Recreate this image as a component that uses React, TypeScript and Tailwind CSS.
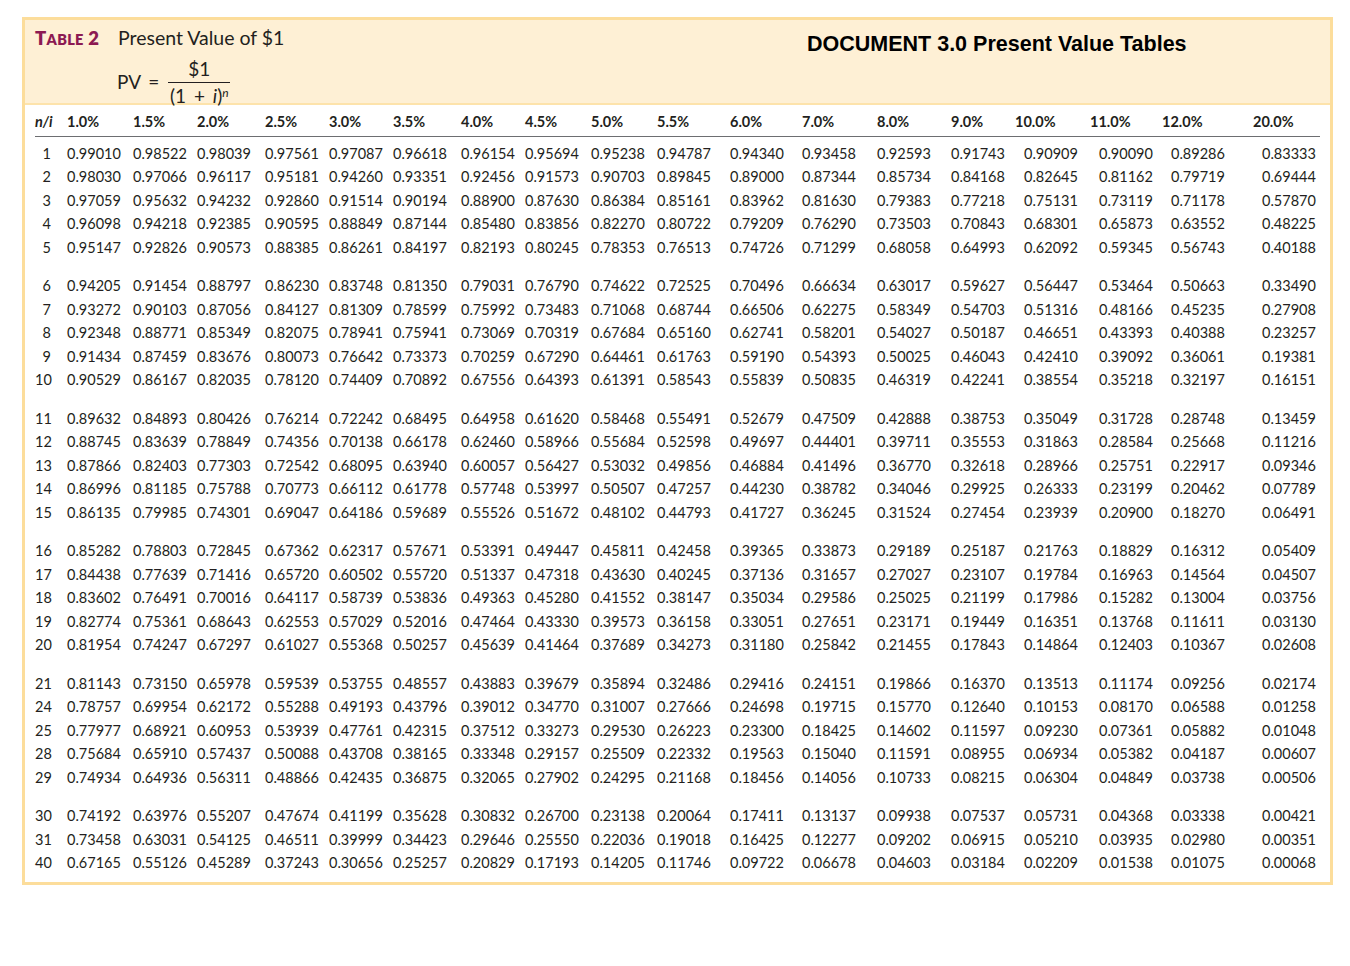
const rates = ["1.0%", "1.5%", "2.0%", "2.5%", "3.0%", "3.5%", "4.0%", "4.5%", "5.0%", "5.5%", "6.0%", "7.0%", "8.0%", "9.0%", "10.0%", "11.0%", "12.0%", "20.0%"];

// column widths measured from the left edge of each data column
const widths = ["w-[66px]", "w-[64px]", "w-[68px]", "w-[64px]", "w-[64px]", "w-[68px]", "w-[64px]", "w-[66px]", "w-[66px]", "w-[73px]", "w-[72px]", "w-[75px]", "w-[74px]", "w-[73px]", "w-[75px]", "w-[72px]", "w-[91px]", "w-[58px]"];

const raw: [string, string][] = [
  ["1", "0.99010 0.98522 0.98039 0.97561 0.97087 0.96618 0.96154 0.95694 0.95238 0.94787 0.94340 0.93458 0.92593 0.91743 0.90909 0.90090 0.89286 0.83333"],
  ["2", "0.98030 0.97066 0.96117 0.95181 0.94260 0.93351 0.92456 0.91573 0.90703 0.89845 0.89000 0.87344 0.85734 0.84168 0.82645 0.81162 0.79719 0.69444"],
  ["3", "0.97059 0.95632 0.94232 0.92860 0.91514 0.90194 0.88900 0.87630 0.86384 0.85161 0.83962 0.81630 0.79383 0.77218 0.75131 0.73119 0.71178 0.57870"],
  ["4", "0.96098 0.94218 0.92385 0.90595 0.88849 0.87144 0.85480 0.83856 0.82270 0.80722 0.79209 0.76290 0.73503 0.70843 0.68301 0.65873 0.63552 0.48225"],
  ["5", "0.95147 0.92826 0.90573 0.88385 0.86261 0.84197 0.82193 0.80245 0.78353 0.76513 0.74726 0.71299 0.68058 0.64993 0.62092 0.59345 0.56743 0.40188"],
  ["6", "0.94205 0.91454 0.88797 0.86230 0.83748 0.81350 0.79031 0.76790 0.74622 0.72525 0.70496 0.66634 0.63017 0.59627 0.56447 0.53464 0.50663 0.33490"],
  ["7", "0.93272 0.90103 0.87056 0.84127 0.81309 0.78599 0.75992 0.73483 0.71068 0.68744 0.66506 0.62275 0.58349 0.54703 0.51316 0.48166 0.45235 0.27908"],
  ["8", "0.92348 0.88771 0.85349 0.82075 0.78941 0.75941 0.73069 0.70319 0.67684 0.65160 0.62741 0.58201 0.54027 0.50187 0.46651 0.43393 0.40388 0.23257"],
  ["9", "0.91434 0.87459 0.83676 0.80073 0.76642 0.73373 0.70259 0.67290 0.64461 0.61763 0.59190 0.54393 0.50025 0.46043 0.42410 0.39092 0.36061 0.19381"],
  ["10", "0.90529 0.86167 0.82035 0.78120 0.74409 0.70892 0.67556 0.64393 0.61391 0.58543 0.55839 0.50835 0.46319 0.42241 0.38554 0.35218 0.32197 0.16151"],
  ["11", "0.89632 0.84893 0.80426 0.76214 0.72242 0.68495 0.64958 0.61620 0.58468 0.55491 0.52679 0.47509 0.42888 0.38753 0.35049 0.31728 0.28748 0.13459"],
  ["12", "0.88745 0.83639 0.78849 0.74356 0.70138 0.66178 0.62460 0.58966 0.55684 0.52598 0.49697 0.44401 0.39711 0.35553 0.31863 0.28584 0.25668 0.11216"],
  ["13", "0.87866 0.82403 0.77303 0.72542 0.68095 0.63940 0.60057 0.56427 0.53032 0.49856 0.46884 0.41496 0.36770 0.32618 0.28966 0.25751 0.22917 0.09346"],
  ["14", "0.86996 0.81185 0.75788 0.70773 0.66112 0.61778 0.57748 0.53997 0.50507 0.47257 0.44230 0.38782 0.34046 0.29925 0.26333 0.23199 0.20462 0.07789"],
  ["15", "0.86135 0.79985 0.74301 0.69047 0.64186 0.59689 0.55526 0.51672 0.48102 0.44793 0.41727 0.36245 0.31524 0.27454 0.23939 0.20900 0.18270 0.06491"],
  ["16", "0.85282 0.78803 0.72845 0.67362 0.62317 0.57671 0.53391 0.49447 0.45811 0.42458 0.39365 0.33873 0.29189 0.25187 0.21763 0.18829 0.16312 0.05409"],
  ["17", "0.84438 0.77639 0.71416 0.65720 0.60502 0.55720 0.51337 0.47318 0.43630 0.40245 0.37136 0.31657 0.27027 0.23107 0.19784 0.16963 0.14564 0.04507"],
  ["18", "0.83602 0.76491 0.70016 0.64117 0.58739 0.53836 0.49363 0.45280 0.41552 0.38147 0.35034 0.29586 0.25025 0.21199 0.17986 0.15282 0.13004 0.03756"],
  ["19", "0.82774 0.75361 0.68643 0.62553 0.57029 0.52016 0.47464 0.43330 0.39573 0.36158 0.33051 0.27651 0.23171 0.19449 0.16351 0.13768 0.11611 0.03130"],
  ["20", "0.81954 0.74247 0.67297 0.61027 0.55368 0.50257 0.45639 0.41464 0.37689 0.34273 0.31180 0.25842 0.21455 0.17843 0.14864 0.12403 0.10367 0.02608"],
  ["21", "0.81143 0.73150 0.65978 0.59539 0.53755 0.48557 0.43883 0.39679 0.35894 0.32486 0.29416 0.24151 0.19866 0.16370 0.13513 0.11174 0.09256 0.02174"],
  ["24", "0.78757 0.69954 0.62172 0.55288 0.49193 0.43796 0.39012 0.34770 0.31007 0.27666 0.24698 0.19715 0.15770 0.12640 0.10153 0.08170 0.06588 0.01258"],
  ["25", "0.77977 0.68921 0.60953 0.53939 0.47761 0.42315 0.37512 0.33273 0.29530 0.26223 0.23300 0.18425 0.14602 0.11597 0.09230 0.07361 0.05882 0.01048"],
  ["28", "0.75684 0.65910 0.57437 0.50088 0.43708 0.38165 0.33348 0.29157 0.25509 0.22332 0.19563 0.15040 0.11591 0.08955 0.06934 0.05382 0.04187 0.00607"],
  ["29", "0.74934 0.64936 0.56311 0.48866 0.42435 0.36875 0.32065 0.27902 0.24295 0.21168 0.18456 0.14056 0.10733 0.08215 0.06304 0.04849 0.03738 0.00506"],
  ["30", "0.74192 0.63976 0.55207 0.47674 0.41199 0.35628 0.30832 0.26700 0.23138 0.20064 0.17411 0.13137 0.09938 0.07537 0.05731 0.04368 0.03338 0.00421"],
  ["31", "0.73458 0.63031 0.54125 0.46511 0.39999 0.34423 0.29646 0.25550 0.22036 0.19018 0.16425 0.12277 0.09202 0.06915 0.05210 0.03935 0.02980 0.00351"],
  ["40", "0.67165 0.55126 0.45289 0.37243 0.30656 0.25257 0.20829 0.17193 0.14205 0.11746 0.09722 0.06678 0.04603 0.03184 0.02209 0.01538 0.01075 0.00068"],
];

const rows = raw.map(([n, vals]) => ({ n, vals: vals.split(" ") }));

// groups of five rows, last group holds three
const groups = [0, 5, 10, 15, 20, 25].map((start) => rows.slice(start, start + 5));

function Row({ n, vals }: { n: string; vals: string[] }) {
  return (
    <div className="flex h-[23.5px] items-center">
      <div className="w-[32px] pr-[16px] text-right">{n}</div>
      {vals.map((v, i) => (
        <div key={i} className={`${widths[i]} shrink-0`}>
          {v}
        </div>
      ))}
    </div>
  );
}

export default function App() {
  return (
    <div className="min-h-[966px] bg-white pl-[22px] pt-[17px] text-[#231f20] font-['Lato','Noto_Sans',sans-serif]">
      <div className="w-[1311px] border-[3px] border-[#fcdd9b]">
        {/* Header band */}
        <div className="flex h-[85px] border-b-2 border-[#fde3ab] bg-[#fef0d5]">
          <div className="w-[770px] pl-[10px]">
            <div className="mt-[3px] flex items-baseline">
              <span className="w-[83px] font-extrabold text-[#8c1a52] text-[18.5px] tracking-[0.3px]">
                T<span className="text-[14.5px]">ABLE</span> 2
              </span>
              <span className="text-[19.5px]">Present Value of $1</span>
            </div>
            <div className="ml-[82px] mt-[3px] flex items-center text-[19px]">
              <span>
                PV <span className="ml-[3px]">=</span>
              </span>
              <div className="ml-[9px] flex flex-col items-center">
                <span className="leading-[26px]">$1</span>
                <div className="h-px w-[62px] bg-[#231f20]" />
                <span className="leading-[26px]">
                  (1 <span className="mx-[3px]">+</span> <i>i</i>)
                  <sup className="text-[12px] italic">n</sup>
                </span>
              </div>
            </div>
          </div>
          <div className="pt-[8px] pl-[12px] font-['Liberation_Sans',Arial,sans-serif] text-[21.5px] font-bold text-black">
            DOCUMENT 3.0 Present Value Tables
          </div>
        </div>

        {/* Table */}
        <div className="px-[10px] pt-[2px] pb-[7px] text-[14.5px]">
          <div className="flex h-[30px] items-center border-b-[1.5px] border-[#6d6e71] font-bold">
            <div className="w-[32px] italic">n/i</div>
            {rates.map((r, i) => (
              <div key={r} className={`${widths[i]} shrink-0 ${i >= 14 ? "-ml-[9px] mr-[9px]" : ""}`}>
                {r}
              </div>
            ))}
          </div>
          <div className="flex flex-col gap-[15px] pt-[5px]">
            {groups.map((g, gi) => (
              <div key={gi}>
                {g.map((r) => (
                  <Row key={r.n} n={r.n} vals={r.vals} />
                ))}
              </div>
            ))}
          </div>
        </div>
      </div>
    </div>
  );
}
